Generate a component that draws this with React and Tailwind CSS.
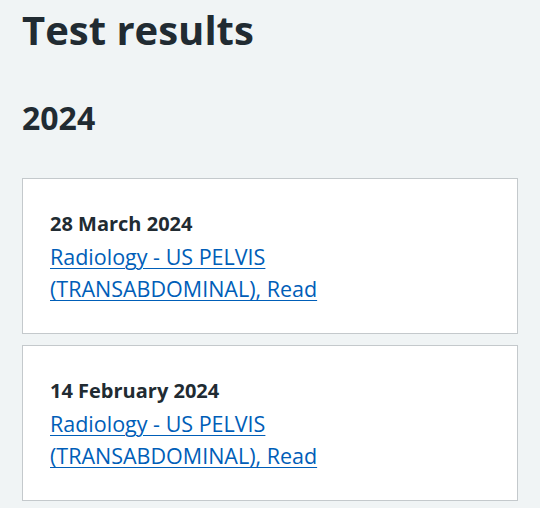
import React from 'react';

const results = [
  { date: '28 March 2024', title: 'Radiology - US PELVIS (TRANSABDOMINAL), Read' },
  { date: '14 February 2024', title: 'Radiology - US PELVIS (TRANSABDOMINAL), Read' },
];

function ResultCard({ date, title }) {
  return (
    <div className="bg-white border border-[#c4c9cc] pl-[27px] pr-6 pt-[31px] pb-[28px]">
      <p className="text-[20px] leading-[28px] font-bold text-[#212b32]">{date}</p>
      <a href="#" className="block mt-[3px] max-w-[320px] text-[21.5px] leading-[32px] text-[#005eb8] underline underline-offset-[3px] decoration-1">
        {title}
      </a>
    </div>
  );
}

export default function App() {
  return (
    <div className="min-h-screen bg-[#f0f4f5] px-[22px] font-['Open_Sans',sans-serif] text-[#212b32]">
      <h1 className="text-[40px] leading-[56px] font-bold pt-[2px]">Test results</h1>
      <h2 className="text-[32px] leading-[40px] font-bold mt-[40px]">2024</h2>
      <div className="mt-[40px] flex flex-col gap-[11px]">
        {results.map((r, i) => (
          <ResultCard key={i} {...r} />
        ))}
      </div>
    </div>
  );
}
